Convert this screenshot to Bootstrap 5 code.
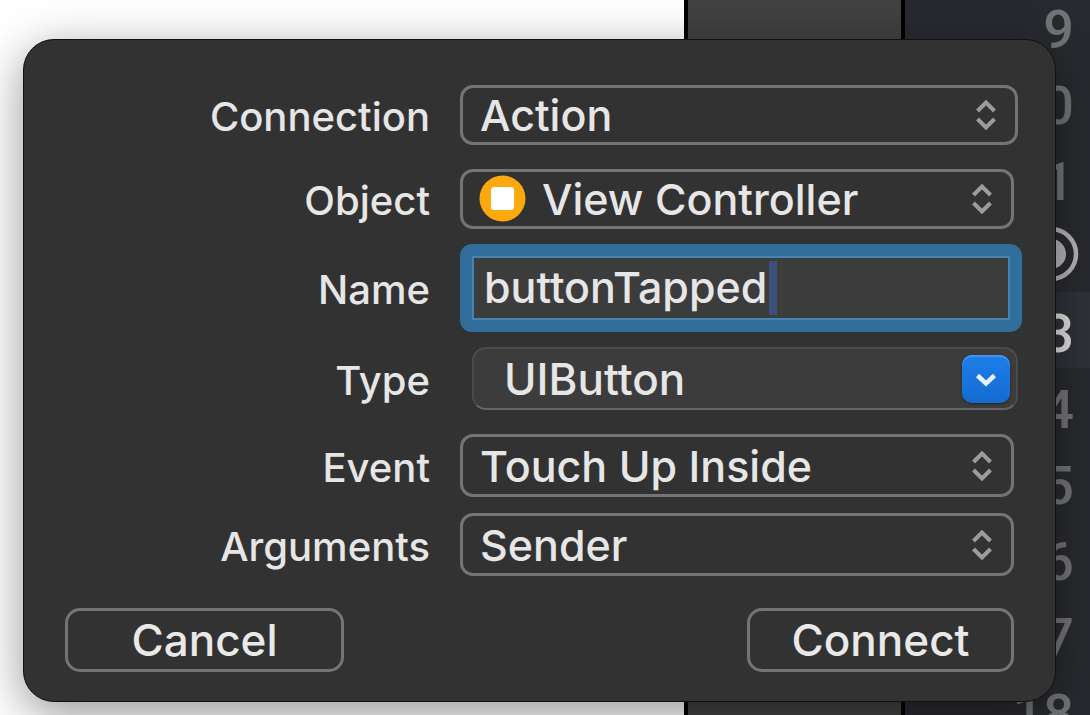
<!DOCTYPE html>
<html lang="en">
<head>
<meta charset="utf-8">
<meta name="viewport" content="width=device-width, initial-scale=1">
<title>Insert connection</title>
<link href="https://cdn.jsdelivr.net/npm/bootstrap@5.3.0/dist/css/bootstrap.min.css" rel="stylesheet">
<style>
body { font-family: Inter, "Liberation Sans", sans-serif; font-weight: 500; color: #e6e6e6; background: #fff; }
.workspace { min-height: 100vh; }
.canvas-pane { background: #fff; }
.divider-pane { flex: 0 0 217px; background: #414141; border-left: 4px solid #000; }
.code-pane { flex: 0 0 189px; background: #292a2f; border-left: 4px solid #000; font: 500 54px/84px Roboto, sans-serif; color: #737478; }
.code-pane .line-no { height: 76px; padding-right: 16px; }
.code-pane .line-no:first-child { height: 64px; line-height: 60px; }
.code-pane .current { background: #2f3239; color: #dfdfdf; }
.popover-panel { margin: 39px 34px 14px 23px; padding: 45px 33px 29px 41px; background: #323232; border: 1px solid #111; border-radius: 31px; box-shadow: 0 12px 48px rgba(0,0,0,.42); }
.field-row { display: grid; grid-template-columns: 365px minmax(0,1fr); column-gap: 30px; align-items: center; }
.field-row label { text-align: right; font-size: 40px; line-height: 48px; padding-top: 4px; }
.field-row .slot { margin-right: 8px; }
.field-row .slot.wide { margin-right: 4px; }
.gap-focus { margin-bottom: 15px; }
.pop-select { appearance: none; display: block; width: 100%; height: 60px; padding: 0 72px 0 17px; border: 3px solid #747474; border-radius: 13px; background: #323232; color: inherit; font-size: 43px; line-height: 50px; font-weight: 500; }
.pop-select.tall { height: 63px; }
.pop-select.with-icon { padding-left: 79px; }
.chevrons { right: 20px; top: 50%; transform: translateY(-50%); pointer-events: none; }
.kind-icon { left: 19px; top: 6px; pointer-events: none; }
.focus-box { height: 88px; padding: 12px; background: #306e9b; border-radius: 12px; }
.focus-box input { width: 100%; height: 64px; border: 2px solid #4584b1; background: #3c3c3c; color: inherit; font: inherit; font-size: 43px; line-height: 50px; padding: 0 10px 3px; outline: 0; }
.text-caret { left: 309px; top: 17px; width: 8px; height: 54px; background: #3b4f7d; }
.combo { height: 63px; margin: 0 4px 0 12px; padding: 0 6px 0 30px; border: 2px solid #4b4b4b; border-bottom-color: #656565; border-radius: 14px; background: #3c3c3c; }
.combo input { min-width: 0; background: none; border: 0; color: inherit; font: inherit; font-size: 44px; padding: 0; outline: 0; }
.combo button { flex: 0 0 48px; height: 48px; border: 0; border-radius: 10px; background: linear-gradient(#1d7ee9,#146bd0); box-shadow: 0 1px 3px rgba(0,0,0,.4), inset 0 2px 1px #4893ed; }
.actions { margin: 32px 8px 0 0; }
.push { height: 64px; border: 3px solid #747474; border-radius: 15px; color: #e9e9e9; font-size: 44px; line-height: 50px; font-weight: 500; padding: 0; }
.push:hover { color: #fff; border-color: #888; }
.push.cancel { width: 279px; }
.push.connect { width: 267px; }
</style>
</head>
<body>
<div class="workspace position-relative overflow-hidden">
  <div class="position-absolute top-0 start-0 w-100 h-100 d-flex overflow-hidden" aria-hidden="true">
    <div class="canvas-pane flex-grow-1"></div>
    <div class="divider-pane"></div>
    <div class="code-pane text-end">
      <ol class="list-unstyled mb-0">
        <li class="line-no">9</li>
        <li class="line-no">10</li>
        <li class="line-no">11</li>
        <li class="line-no d-flex justify-content-end align-items-center">
          <svg class="overflow-visible" width="54" height="54" viewBox="0 0 54 54"><circle cx="31" cy="27" r="25" fill="none" stroke="#b5b5b7" stroke-width="4.500"/><circle cx="31" cy="27" r="15" fill="#b5b5b7"/></svg>
        </li>
        <li class="line-no current">13</li>
        <li class="line-no">14</li>
        <li class="line-no">15</li>
        <li class="line-no">16</li>
        <li class="line-no">17</li>
        <li class="line-no">18</li>
      </ol>
    </div>
  </div>

  <svg class="d-none">
    <symbol id="updown" viewBox="0 0 24 32"><path d="M3.500 12 12 3.500 20.500 12M3.500 20 12 28.500 20.500 20" fill="none" stroke="#9c9c9c" stroke-width="4"/></symbol>
  </svg>

  <form class="popover-panel position-relative" onsubmit="return false">
    <div class="field-row mb-4">
      <label for="connection">Connection</label>
      <div class="slot wide position-relative">
        <select id="connection" class="pop-select"><option>Action</option><option>Outlet</option></select>
        <svg class="chevrons position-absolute" width="24" height="32"><use href="#updown"/></svg>
      </div>
    </div>
    <div class="field-row gap-focus">
      <label for="object">Object</label>
      <div class="slot position-relative">
        <select id="object" class="pop-select with-icon"><option>View Controller</option></select>
        <svg class="kind-icon position-absolute" width="47" height="47" viewBox="0 0 47 47"><circle cx="23.500" cy="23.500" r="23" fill="#fba90d"/><rect x="12" y="12" width="23" height="23" rx="3" fill="#fff"/></svg>
        <svg class="chevrons position-absolute" width="24" height="32"><use href="#updown"/></svg>
      </div>
    </div>
    <div class="field-row gap-focus">
      <label for="name">Name</label>
      <div class="focus-box position-relative">
        <input id="name" class="d-block rounded-0" type="text" value="buttonTapped">
        <span class="text-caret position-absolute"></span>
      </div>
    </div>
    <div class="field-row mb-4">
      <label for="type">Type</label>
      <div class="combo d-flex align-items-center">
        <input id="type" class="flex-grow-1" type="text" value="UIButton">
        <button type="button" class="p-0 d-flex align-items-center justify-content-center" aria-label="Show types">
          <svg width="24" height="20" viewBox="0 0 24 20"><path d="M3.500 6.500 12 14.500 20.500 6.500" fill="none" stroke="#e8f1fd" stroke-width="4.500"/></svg>
        </button>
      </div>
    </div>
    <div class="field-row mb-3">
      <label for="event">Event</label>
      <div class="slot position-relative">
        <select id="event" class="pop-select tall"><option>Touch Up Inside</option></select>
        <svg class="chevrons position-absolute" width="24" height="32"><use href="#updown"/></svg>
      </div>
    </div>
    <div class="field-row">
      <label for="arguments">Arguments</label>
      <div class="slot position-relative">
        <select id="arguments" class="pop-select tall"><option>Sender</option></select>
        <svg class="chevrons position-absolute" width="24" height="32"><use href="#updown"/></svg>
      </div>
    </div>
    <div class="actions d-flex justify-content-between">
      <button type="button" class="btn push cancel">Cancel</button>
      <button type="submit" class="btn push connect">Connect</button>
    </div>
  </form>
</div>
<script src="https://cdn.jsdelivr.net/npm/bootstrap@5.3.0/dist/js/bootstrap.bundle.min.js"></script>
</body>
</html>
